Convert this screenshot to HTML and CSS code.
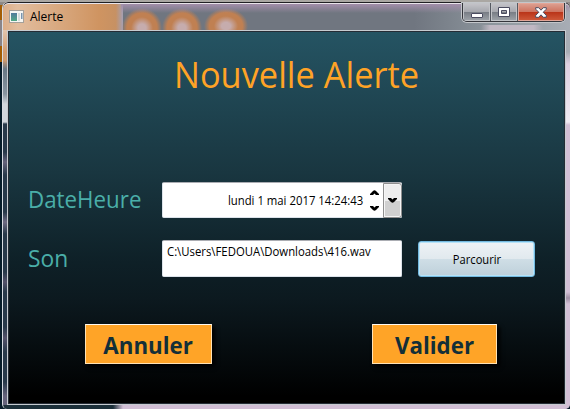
FILE: index.html
```html
<!DOCTYPE html>
<html lang="fr">
<head>
<meta charset="utf-8">
<title>Alerte</title>
<link rel="stylesheet" href="styles.css">
</head>
<body>
<div class="window">
  <header class="titlebar">
    <svg class="app-icon" width="15" height="13" viewBox="0 0 15 13">
      <defs><linearGradient id="pane" x2="0" y2="1"><stop stop-color="#527b9c"/><stop offset="1" stop-color="#52a886"/></linearGradient></defs>
      <rect x=".5" y=".5" width="14" height="12" fill="#f6f6f3" stroke="#a4a09a"/>
      <path d="M2 3h6v8H2z" fill="url(#pane)"/><path d="M9 3h2v8H9z" fill="#d5dddd"/><path d="M12 3h1.5v6H12z" fill="#7895b0"/>
    </svg>
    <span class="caption">Alerte</span>
    <div class="controls">
      <span class="control"><svg width="12" height="5"><rect x=".5" y=".5" width="11" height="4" rx=".5" fill="#fff" stroke="#4b4c60"/></svg></span>
      <span class="control maximize"><svg width="12" height="10"><path fill-rule="evenodd" d="M.5.5h11v9H.5zM3.5 3.5v3h5v-3z" fill="#fff" stroke="#4b4c60"/></svg></span>
      <span class="control close"><svg width="12" height="11"><path d="M.7.7h3L6 3.2 8.300.7h3v1.500L8.200 5.300l3.100 3v2h-3L6 7.800 3.700 10.300h-3v-2l3.100-3L.7 2.200z" fill="#fff" stroke="#4b4c60"/></svg></span>
    </div>
  </header>
  <main class="client">
    <h1><span class="fit title-text">Nouvelle Alerte</span></h1>
    <div class="row date-row">
      <label><span class="fit date-label">DateHeure</span></label>
      <div class="field date-field">
        <span class="fit date-value">lundi 1 mai 2017 14:24:43</span>
        <div class="spinner">
          <svg width="9" height="5"><path d="M0 4L3 1Q4.500-.5 6 1L9 4V5H6L4.500 3.500 3 5H0z"/></svg>
          <svg width="9" height="5"><path d="M0 1L3 4Q4.500 5.500 6 4L9 1V0H6L4.500 1.500 3 0H0z"/></svg>
        </div>
        <div class="drop"><svg width="9" height="5"><path d="M0 1L3 4Q4.500 5.500 6 4L9 1V0H6L4.500 1.500 3 0H0z"/></svg></div>
      </div>
    </div>
    <div class="row sound-row">
      <label><span class="fit sound-label">Son</span></label>
      <div class="field sound-field"><span class="fit path-value">C:\Users\FEDOUA\Downloads\416.wav</span></div>
      <button class="browse"><span class="fit browse-text">Parcourir</span></button>
    </div>
    <div class="actions">
      <button class="action cancel"><span class="fit cancel-text">Annuler</span></button>
      <button class="action accept"><span class="fit accept-text">Valider</span></button>
    </div>
  </main>
</div>
</body>
</html>
```
FILE: styles.css
```css
* { box-sizing: border-box; }
html, body { width: 570px; height: 409px; overflow: hidden; }
body {
  margin: 0;
  padding: 2px 0 0 2px;
  font: 12px "Open Sans", "Noto Sans", sans-serif;
  background:
    linear-gradient(#aaa7a3, #aaa7a3) 0 0 / 100% 2px no-repeat,
    linear-gradient(#8e8a88 0 5px, #a35d05 5px 20px, #8a8488 20px 46px, #a35d05 46px 62px, #061b28 62px);
}
.window {
  width: 568px;
  height: 407px;
  padding: 1px 4px 4px 4px;
  border: solid #d9dce2;
  border-width: 0 0 0 1px;
  border-radius: 6px 6px 5px 5px;
  box-shadow: inset 0 1px #202023, inset 0 2px #e8e4ea;
  background:
    linear-gradient(#a38eaa, transparent) 118px 2px / 450px 9px no-repeat,
    radial-gradient(closest-side, #c6acad 20%, #c08052 55%, #c08052 75%, transparent) 119px 6px / 40px 40px no-repeat,
    radial-gradient(closest-side, #c6acad 20%, #c08052 55%, #c08052 75%, transparent) 159px 6px / 40px 40px no-repeat,
    radial-gradient(closest-side, #c6acad 20%, #c08052 55%, #c08052 75%, transparent) 201px 6px / 44px 36px no-repeat,
    linear-gradient(90deg, #dcae89, #e2bd9e 12%, #cf9461 80%, #c79163 94%, #a6a0b3) 0 0 / 120px 28px no-repeat,
    linear-gradient(90deg, transparent, #c0b8c3 15% 85%, transparent) 478px 23px / 62px 5px no-repeat,
    linear-gradient(90deg, #707680 65%, #929ba2 86%, #a8adb5) 120px 0 / 448px 28px no-repeat,
    linear-gradient(#e2c5af 28px, #d39c70 50px, #d39c70 58px, #687784 67px, #8995a0 92px, #d2d6dc 102px, #d2d6dc 120px, #28394a 122px, #28394a 150px, #66647c 160px, #28394a 173px, #28394a 210px, #706c84 220px, #28394a 232px, #28394a 270px, #55536b 280px, #28394a 290px, #28394a 325px, #55536b 336px, #28394a 350px, #28394a 380px, #66647c 394px) 0 0 / 5px 403px no-repeat,
    linear-gradient(#a8adb5 50px, #decfe0 62px, #f0eaf2 120px, #d2bfd5 123px, #d2bfd5 290px, #a08fa5 296px, #d2bfd5 302px) 562px 0 / 6px 407px no-repeat,
    linear-gradient(90deg, #1c303a 110px, #d2bfd5 120px);
}
.titlebar { display: flex; height: 27px; padding-left: 2px; }
.app-icon { margin-top: 7px; }
.caption { margin: 5px 0 0 6px; line-height: 18px; color: #000; }
.controls {
  display: flex;
  width: 103px;
  height: 19px;
  margin: 0 1px 0 auto;
  border: 1px solid #34353b;
  border-top: 0;
  border-radius: 0 0 5px 5px;
  box-shadow: 0 0 0 1px #c3c6ca;
  overflow: hidden;
}
.control {
  display: flex;
  align-items: center;
  justify-content: center;
  width: 27px;
  border-right: 1px solid #555961;
  box-shadow: inset 0 0 0 1px #c1c3c7;
  background: linear-gradient(#c6c5ca, #a6a8ae 48%, #777c84 50%, #a0a5aa);
}
.control:first-child { padding-top: 6px; width: 28px; }
.close { flex: 1; border-right: 0; box-shadow: inset 0 0 0 1px #e2a698; background: linear-gradient(#dda294, #ce7460 48%, #b93318 50%, #d05c3c); }
.client {
  width: 559px;
  height: 375px;
  padding: 20px 0 0 20px;
  border: 1px solid #c7cbd0;
  box-shadow: inset 0 0 0 1px #252c35;
  background: linear-gradient(#255463, #193640 38%, #0e2027 62%, #0c191f 72%, #000 98%);
}
.fit { display: inline-block; white-space: nowrap; transform-origin: left; }
h1 { margin: 0 0 0 146px; height: 131px; color: #ffa326; font-size: 36px; line-height: 48px; font-weight: 400; }
.title-text { transform: scaleX(.955); }
.row { display: flex; }
.row label { width: 134px; color: #4aaea8; font-size: 24px; line-height: 34px; }
.date-label { transform: scaleX(.93); }
.sound-label { transform: scaleX(.95); }
.date-row { height: 58px; }
.field { width: 240px; color: #000; background: #fff; border: 1px solid #dce3ea; border-top-color: #abadb3; border-radius: 2px; }
.date-field { display: flex; justify-content: flex-end; align-items: center; height: 36px; }
.date-value { transform: scaleX(.945); transform-origin: right; }
.path-value { transform: scaleX(.945); }
.spinner { display: flex; flex-direction: column; justify-content: space-between; height: 21px; margin: 0 4px 0 7px; }
.spinner svg, .drop svg { display: block; }
.drop { display: flex; align-items: center; justify-content: center; width: 19px; height: 35px; margin-right: -1px; border: 1px solid #8f8f8f; border-radius: 0 3px 3px 0; box-shadow: inset 0 0 0 1px #f5f5f5; background: linear-gradient(#eee 50%, #d0d0d0 50%); }
.sound-row { height: 84px; }
.sound-row label { line-height: 36px; }
.sound-field { height: 37px; padding: 2px 4px; line-height: 18px; }
button { font-family: inherit; padding: 0; display: flex; align-items: center; justify-content: center; }
button .fit { transform: scaleX(.93); transform-origin: center; }
.browse { width: 117px; height: 36px; margin: 1px 0 0 16px; font-size: 12px; color: #000; border: 1px solid #72b9df; border-radius: 3px; box-shadow: inset 0 0 0 1px #b7e3f7; background: linear-gradient(#eef3f6, #e1e9ee 49%, #cfdee6 50%, #bed0da); }
.actions { display: flex; gap: 160px; padding-left: 57px; }
.action { height: 40px; color: #132f38; font-size: 24px; font-weight: 700; border: 1px solid #ffe2b5; border-top-color: #fffaf0; background: #ffa427; box-shadow: 3px 3px 4px #000; }
.cancel { width: 127px; }
.accept { width: 125px; }
```
